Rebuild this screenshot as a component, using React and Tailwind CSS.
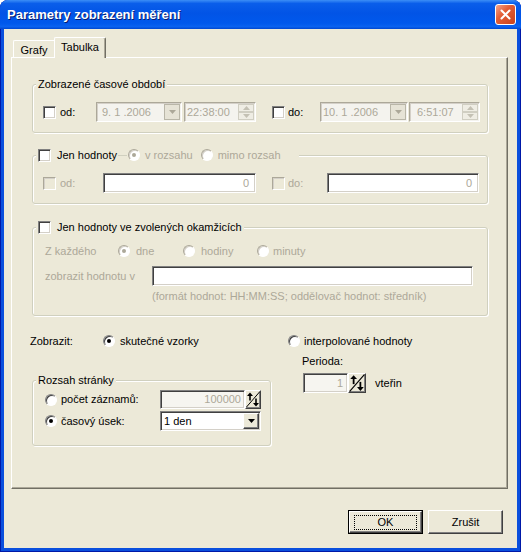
import React from "react";

const sunken =
  "border border-t-[#808080] border-l-[#808080] border-r-white border-b-white shadow-[inset_1px_1px_0_#404040,inset_-1px_-1px_0_#D4D0C8]";
const sunkenOff =
  "border border-t-[#ACA899] border-l-[#ACA899] border-r-white border-b-white shadow-[inset_1px_1px_0_#D4D0C8]";
const raised =
  "border border-t-white border-l-white border-r-[#404040] border-b-[#404040] shadow-[inset_-1px_-1px_0_#808080] bg-[#ECE9D8]";
const off = "text-[#ACA899]";

const CheckBox = ({ disabled }) => (
  <span
    className={`block w-[13px] h-[13px] shrink-0 ${
      disabled ? `${sunkenOff} bg-[#ECE9D8]` : `${sunken} bg-white`
    }`}
  />
);

const Radio = ({ checked, disabled }) => (
  <span
    className={`flex items-center justify-center w-[12px] h-[12px] shrink-0 rounded-full border bg-white ${
      disabled
        ? "border-t-[#ACA899] border-l-[#ACA899] border-r-white border-b-white shadow-[inset_1px_1px_0_#D4D0C8]"
        : "border-t-[#808080] border-l-[#808080] border-r-white border-b-white shadow-[inset_1px_1px_0_#404040]"
    }`}
  >
    {checked && (
      <span className={`w-[4px] h-[4px] rounded-full ${disabled ? "bg-[#ACA899]" : "bg-black"}`} />
    )}
  </span>
);

const Tri = ({ up, color = "#000" }) => (
  <svg width="7" height="4" viewBox="0 0 7 4">
    <polygon points={up ? "0,4 7,4 3.5,0" : "0,0 7,0 3.5,4"} fill={color} />
  </svg>
);

// the spin button with the crossed arrows
const SpinIcon = ({ w = 16, h = 18 }) => (
  <span className={`flex shrink-0 items-center justify-center ${raised}`} style={{ width: w, height: h }}>
    <svg width={w - 2} height={h - 2} viewBox="0 0 14 16">
      <line x1="0.5" y1="15.5" x2="13.5" y2="0.5" stroke="#000" strokeWidth="1" />
      <line x1="4" y1="9" x2="4" y2="3" stroke="#000" strokeWidth="1.6" />
      <polygon points="1,4.5 4,1 7,4.5" fill="#000" />
      <line x1="10" y1="7" x2="10" y2="13" stroke="#000" strokeWidth="1.6" />
      <polygon points="7,11.5 10,15 13,11.5" fill="#000" />
    </svg>
  </span>
);

const DateField = ({ value, w, pl }) => (
  <div className={`flex items-center h-[20px] bg-[#F4F3EE] ${sunkenOff}`} style={{ width: w }}>
    <span className={`flex-1 ${off}`} style={{ paddingLeft: pl }}>
      {value}
    </span>
    <span className="flex items-center justify-center w-[16px] h-[16px] mr-[1px] border border-[#B9B6A8] bg-[#E6E3D6]">
      <Tri color="#ACA899" />
    </span>
  </div>
);

const TimeField = ({ value, w, pl }) => (
  <div className={`flex items-center h-[20px] bg-[#F4F3EE] ${sunkenOff}`} style={{ width: w }}>
    <span className={`flex-1 ${off}`} style={{ paddingLeft: pl }}>
      {value}
    </span>
    <div className="flex flex-col w-[16px] h-[16px] mr-[1px]">
      <span className="flex flex-1 items-center justify-center border border-[#D0CEC2] bg-[#EFEDE4]">
        <Tri up color="#C4C1B4" />
      </span>
      <span className="flex flex-1 items-center justify-center border border-[#D0CEC2] bg-[#EFEDE4]">
        <Tri color="#C4C1B4" />
      </span>
    </div>
  </div>
);

const Group = ({ legend, className, children }) => (
  <fieldset
    className={`border border-[#D0D0BF] rounded-[3px] pl-[3px] shadow-[inset_1px_1px_0_#fff,1px_1px_0_#fff] ${className}`}
  >
    <legend className="flex items-center px-[2px] h-[14px] leading-[14px] bg-[#ECE9D8]">{legend}</legend>
    {children}
  </fieldset>
);

export default function App() {
  return (
    <div className="w-[521px] h-[552px] flex flex-col rounded-t-[8px] overflow-hidden bg-[#0A4FDD] shadow-[inset_1px_0_0_#0019A8,inset_-1px_0_0_#0019A8,inset_0_-1px_0_#0019A8] font-['Liberation_Sans',Arial,sans-serif] text-[11px] leading-[13px] text-black">
      {/* title bar */}
      <div className="flex items-center h-[29px] pl-[7px] pr-[5px] bg-[linear-gradient(180deg,#3C8EF6_0%,#0A5EEA_12%,#0254E6_45%,#0058EC_80%,#0A62F0_92%,#0046CF_100%)]">
        <span className="flex-1 text-[13px] font-bold text-white [text-shadow:1px_1px_0_#0A1E6E]">
          Parametry zobrazení měření
        </span>
        <span className="flex items-center justify-center w-[21px] h-[21px] rounded-[3px] border border-white bg-[linear-gradient(135deg,#F2A58D_0%,#E35E37_40%,#C9421C_100%)]">
          <svg width="11" height="11" viewBox="0 0 11 11">
            <path d="M1.5 1.5 L9.5 9.5 M9.5 1.5 L1.5 9.5" stroke="#fff" strokeWidth="2" strokeLinecap="round" />
          </svg>
        </span>
      </div>

      {/* client area */}
      <div className="flex flex-col flex-1 mx-[4px] mb-[4px] bg-[#ECE9D8]">
        {/* tabs */}
        <div className="flex items-end h-[20px] mt-[8px] ml-[9px]">
          <div className="flex items-center justify-center w-[41px] h-[17px] border-t border-l border-white rounded-tl-[2px] pt-[2px]">
            Grafy
          </div>
          <div className="relative z-10 flex items-start justify-center w-[52px] h-[21px] mb-[-1px] pt-[3px] bg-[#ECE9D8] border-t border-l border-r border-t-white border-l-white border-r-[#716F64] shadow-[inset_-1px_0_0_#ACA899] rounded-t-[2px]">
            Tabulka
          </div>
        </div>

        {/* tab panel */}
        <div className="flex flex-col w-[497px] h-[432px] ml-[7px] pl-[20px] border border-t-white border-l-white border-r-[#716F64] border-b-[#716F64] shadow-[inset_-1px_-1px_0_#ACA899]">
          {/* Zobrazené časové období */}
          <Group legend="Zobrazené časové období" className="w-[456px] mt-[19px] pt-[11px] pb-[10px]">
            <div className="flex items-center h-[20px] pl-[7px]">
              <CheckBox />
              <span className="w-[36px] ml-[4px]">od:</span>
              <DateField value="9. 1 .2006" w={86} pl={5} />
              <div className="ml-[2px]">
                <TimeField value="22:38:00" w={72} pl={2} />
              </div>
              <span className="ml-[16px]">
                <CheckBox />
              </span>
              <span className="w-[32px] ml-[3px]">do:</span>
              <DateField value="10. 1 .2006" w={88} pl={2} />
              <div className="ml-[1px]">
                <TimeField value="6:51:07" w={71} pl={7} />
              </div>
            </div>
          </Group>

          {/* Jen hodnoty */}
          <Group
            className="w-[456px] mt-[15px] pt-[11px] pb-[10px]"
            legend={
              <>
                <CheckBox />
                <span className="ml-[6px]">Jen hodnoty</span>
                <span className="w-[9px] h-px mx-[1px] bg-[#D0D0BF]" />
                <Radio checked disabled />
                <span className={`ml-[5px] ${off}`}>v rozsahu</span>
                <span className="ml-[8px]">
                  <Radio disabled />
                </span>
                <span className={`ml-[5px] mr-[16px] ${off}`}>mimo rozsah</span>
              </>
            }
          >
            <div className="flex items-center h-[20px] pl-[7px]">
              <CheckBox disabled />
              <span className={`w-[43px] ml-[4px] ${off}`}>od:</span>
              <div className={`flex items-center justify-end w-[153px] h-[20px] pr-[6px] bg-white ${sunken} ${off}`}>0</div>
              <span className="ml-[16px]">
                <CheckBox disabled />
              </span>
              <span className={`w-[39px] ml-[3px] ${off}`}>do:</span>
              <div className={`flex items-center justify-end w-[152px] h-[20px] pr-[6px] bg-white ${sunken} ${off}`}>0</div>
            </div>
          </Group>

          {/* Jen hodnoty ve zvolených okamžicích */}
          <Group
            className="w-[456px] mt-[16px] pt-[9px] pb-[12px]"
            legend={
              <>
                <CheckBox />
                <span className="ml-[6px]">Jen hodnoty ve zvolených okamžicích</span>
              </>
            }
          >
            <div className={`flex items-center h-[16px] pl-[9px] ${off}`}>
              <span className="w-[73px]">Z každého</span>
              <span className="flex items-center w-[65px]">
                <Radio checked disabled />
                <span className="ml-[6px]">dne</span>
              </span>
              <span className="flex items-center w-[74px]">
                <Radio disabled />
                <span className="ml-[6px]">hodiny</span>
              </span>
              <span className="flex items-center">
                <Radio disabled />
                <span className="ml-[4px]">minuty</span>
              </span>
            </div>
            <div className="flex items-center h-[20px] mt-[7px] pl-[9px]">
              <span className={`w-[107px] ${off}`}>zobrazit hodnotu v</span>
              <div className={`w-[321px] h-[20px] bg-white ${sunken}`} />
            </div>
            <div className={`h-[14px] mt-[3px] pl-[116px] leading-[14px] ${off}`}>
              (formát hodnot: HH:MM:SS; oddělovač hodnot: středník)
            </div>
          </Group>

          {/* Zobrazit */}
          <div className="flex mt-[17px]">
            <div className="w-[256px]">
              <div className="flex items-center h-[16px] ml-[-2px]">
                <span className="w-[73px]">Zobrazit:</span>
                <Radio checked />
                <span className="ml-[5px]">skutečné vzorky</span>
              </div>

              <Group legend="Rozsah stránky" className="w-[239px] mt-[24px] pt-[3px] pb-[14px]">
                <div className="flex items-center h-[19px] pl-[9px]">
                  <span className="flex items-center w-[115px]">
                    <Radio />
                    <span className="ml-[4px]">počet záznamů:</span>
                  </span>
                  <div className={`flex items-center justify-end w-[85px] h-[19px] pr-[3px] bg-[#F6F5F0] ${sunken} ${off}`}>
                    100000
                  </div>
                  <SpinIcon w={16} h={19} />
                </div>
                <div className="flex items-center h-[20px] mt-[2px] pl-[9px]">
                  <span className="flex items-center w-[115px]">
                    <Radio checked />
                    <span className="ml-[4px]">časový úsek:</span>
                  </span>
                  <div className={`flex items-center w-[101px] h-[20px] bg-white ${sunken}`}>
                    <span className="flex-1 pl-[3px]">1 den</span>
                    <span className={`flex items-center justify-center w-[16px] h-[16px] mr-[1px] ${raised}`}>
                      <Tri />
                    </span>
                  </div>
                </div>
              </Group>
            </div>

            <div className="flex-1">
              <div className="flex items-center h-[16px]">
                <Radio />
                <span className="ml-[4px]">interpolované hodnoty</span>
              </div>
              <div className="h-[14px] mt-[5px] pl-[14px] leading-[14px]">Perioda:</div>
              <div className="flex items-center h-[20px] mt-[5px] pl-[15px]">
                <div className={`flex items-center justify-end w-[45px] h-[20px] pr-[4px] bg-[#F6F5F0] ${sunken} ${off}`}>1</div>
                <SpinIcon w={18} h={20} />
                <span className="ml-[9px]">vteřin</span>
              </div>
            </div>
          </div>
        </div>

        {/* buttons */}
        <div className="flex justify-end gap-[5px] mt-[21px] pr-[14px]">
          <button className="flex items-center justify-center w-[75px] h-[24px] border border-black bg-[#ECE9D8] p-0">
            <span className="flex items-center justify-center w-full h-full border border-t-white border-l-white border-r-[#404040] border-b-[#404040] shadow-[inset_-1px_-1px_0_#808080]">
              <span className="flex items-center justify-center w-[63px] h-[15px] border border-dotted border-black">OK</span>
            </span>
          </button>
          <button className={`flex items-center justify-center w-[75px] h-[24px] p-0 ${raised}`}>Zrušit</button>
        </div>
      </div>
    </div>
  );
}
